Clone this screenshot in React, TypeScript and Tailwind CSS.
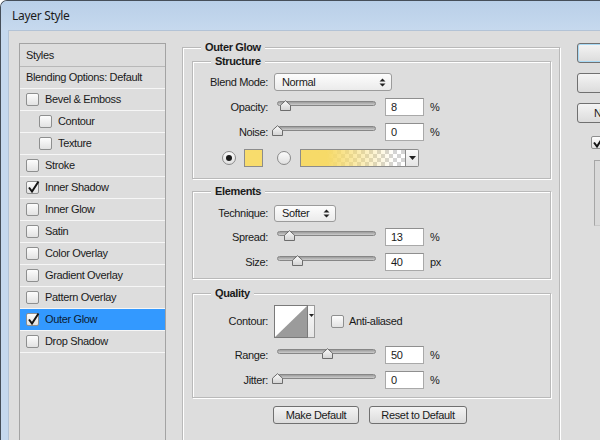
import React from "react";

function Check({ checked = false, className = "" }: { checked?: boolean; className?: string }) {
  return (
    <div
      className={`relative w-[13px] h-[13px] shrink-0 rounded-[2px] border border-[#8e8f8f] bg-linear-to-b from-[#fdfdfd] to-[#e2e2e2] ${className}`}
    >
      {checked && (
        <svg className="absolute left-[0px] -top-[2px]" width="13" height="14" viewBox="0 0 13 14">
          <path d="M2 7.5 L5 11.5 L11.5 1.5" fill="none" stroke="#151515" strokeWidth="2" />
        </svg>
      )}
    </div>
  );
}

function Radio({ on = false }: { on?: boolean }) {
  return (
    <div className="w-[14px] h-[14px] shrink-0 rounded-full border border-[#8a8a8a] bg-linear-to-b from-[#fbfbfb] to-[#e0e0e0] flex items-center justify-center">
      {on && <div className="w-[6px] h-[6px] rounded-full bg-[#1a1a1a]" />}
    </div>
  );
}

function UpDown() {
  return (
    <svg width="7" height="9" viewBox="0 0 7 9">
      <path d="M0.5 3.5 L3.5 0.5 L6.5 3.5 Z M0.5 5.5 L3.5 8.5 L6.5 5.5 Z" fill="#222" />
    </svg>
  );
}

function Label({ children }: { children: React.ReactNode }) {
  return <div className="w-[75px] shrink-0 text-right">{children}</div>;
}

function Field({ value }: { value: string }) {
  return (
    <div className="ml-[3px] w-[39px] h-[18px] shrink-0 flex items-center pl-[5px] bg-white border border-[#a9a9a9] border-t-[#8f8f8f]">
      {value}
    </div>
  );
}

function Slider({ pos }: { pos: number }) {
  return (
    <div className="relative ml-[4px] w-[110px] h-[18px] shrink-0">
      <div className="absolute left-[5px] top-[3px] w-[99px] h-[5px] rounded-full border border-[#868686] bg-linear-to-b from-[#9c9c9c] to-[#cdcdcd]" />
      <svg className="absolute top-[2px]" style={{ left: pos }} width="11" height="11" viewBox="0 0 11 11">
        <defs>
          <linearGradient id="thumbg" x1="0" y1="0" x2="0" y2="1">
            <stop offset="0" stopColor="#fbfbfb" />
            <stop offset="1" stopColor="#d2d2d2" />
          </linearGradient>
        </defs>
        <path d="M5.5 0.7 L10.5 5.2 L10.5 10.5 L0.5 10.5 L0.5 5.2 Z" fill="url(#thumbg)" stroke="#6c6c6c" />
      </svg>
    </div>
  );
}

function SliderRow({ label, pos, value, unit }: { label: string; pos: number; value: string; unit: string }) {
  return (
    <div className="flex items-center h-[18px]">
      <Label>{label}</Label>
      <Slider pos={pos} />
      <Field value={value} />
      <div className="ml-[6px]">{unit}</div>
    </div>
  );
}

function Group({
  title,
  legendClass,
  className = "",
  children,
}: {
  title: string;
  legendClass: string;
  className?: string;
  children: React.ReactNode;
}) {
  return (
    <div className={`border border-[#b9b9b9] shadow-[inset_1px_1px_0_#ffffff,1px_1px_0_#ffffff] ${className}`}>
      <div className={`-mt-[8px] -mb-[6px] h-[14px] leading-[14px] w-fit px-[4px] bg-[#dddddd] font-bold ${legendClass}`}>
        {title}
      </div>
      {children}
    </div>
  );
}

function Button({ children, className = "" }: { children: React.ReactNode; className?: string }) {
  return (
    <div
      className={`shrink-0 flex items-center rounded-[3px] border border-[#707070] bg-linear-to-b from-[#f4f4f4] to-[#dcdcdc] ${className}`}
    >
      {children}
    </div>
  );
}

const items: { name: string; indent?: boolean; checked?: boolean; active?: boolean }[] = [
  { name: "Bevel & Emboss" },
  { name: "Contour", indent: true },
  { name: "Texture", indent: true },
  { name: "Stroke" },
  { name: "Inner Shadow", checked: true },
  { name: "Inner Glow" },
  { name: "Satin" },
  { name: "Color Overlay" },
  { name: "Gradient Overlay" },
  { name: "Pattern Overlay" },
  { name: "Outer Glow", checked: true, active: true },
  { name: "Drop Shadow" },
];

export default function App() {
  return (
    <div className="w-[600px] h-[440px] overflow-hidden bg-white font-['Liberation_Sans',Arial,sans-serif] text-[11px] text-[#1a1a1a] tracking-[-0.35px]">
      <div className="w-[660px] h-[500px] flex flex-col rounded-tl-[7px] border-l border-t border-[#454e59] bg-[#c5d8ee]">
        {/* Title bar */}
        <div className="h-[29px] shrink-0 flex items-center pl-[11px] rounded-tl-[6px] bg-linear-to-b from-[#b9cfe8] to-[#c6d9ee] font-['Noto_Sans',sans-serif] text-[12px] tracking-[-0.3px] text-[#1b1b1b]">
          Layer Style
        </div>
        <div className="flex-1 flex pl-[7px]">
          <div className="flex-1 flex items-start bg-[#dddddd] border-l border-t border-[#b3c3d6]">
            {/* Styles list */}
            <div className="ml-[10px] mt-[12px] w-[147px] h-[420px] shrink-0 border border-[#a3a3a3] flex flex-col">
              <div className="h-[23px] shrink-0 flex items-center pl-[6px] border-b border-[#b8b8b8]">Styles</div>
              <div className="h-[22px] shrink-0 flex items-center pl-[6px] border-b border-[#f6f6f6]">
                Blending Options: Default
              </div>
              {items.map((it) => (
                <div
                  key={it.name}
                  className={`h-[22px] shrink-0 flex items-center gap-[6px] border-b border-[#f6f6f6] ${
                    it.indent ? "pl-[19px]" : "pl-[6px]"
                  } ${it.active ? "bg-[#3399ff] text-[#0c1c33]" : ""}`}
                >
                  <Check checked={it.checked} />
                  <span>{it.name}</span>
                </div>
              ))}
            </div>

            {/* Outer Glow panel */}
            <Group
              title="Outer Glow"
              legendClass="ml-[9px]"
              className="ml-[16px] mt-[16px] w-[378px] h-[420px] shrink-0 pl-[9px] pr-[8px]"
            >
              <Group title="Structure" legendClass="ml-[18px]" className="mt-[13px]">
                <div className="pt-[11px] pb-[11px] flex flex-col gap-[7px]">
                  <div className="flex items-center h-[18px]">
                    <Label>Blend Mode:</Label>
                    <div className="ml-[6px] w-[118px] h-[18px] flex items-center justify-between pl-[7px] pr-[5px] rounded-[3px] border border-[#9b9b9b] bg-linear-to-b from-[#fdfdfd] to-[#ebebeb]">
                      <span>Normal</span>
                      <UpDown />
                    </div>
                  </div>
                  <SliderRow label="Opacity:" pos={8} value="8" unit="%" />
                  <SliderRow label="Noise:" pos={0} value="0" unit="%" />
                  <div className="mt-[1px] h-[18px] flex items-center pl-[29px]">
                    <Radio on />
                    <div className="ml-[8px] w-[19px] h-[18px] border border-[#8c8c8c] bg-[#f8dc6c]" />
                    <div className="ml-[14px]">
                      <Radio />
                    </div>
                    <div className="ml-[9px] flex h-[18px]">
                      <div className="w-[106px] h-[18px] border border-[#8c8c8c] bg-[conic-gradient(#d4d4d4_25%,#ffffff_0_50%,#d4d4d4_0_75%,#ffffff_0)] bg-[length:8px_8px]">
                        <div className="w-full h-full bg-linear-to-r from-[#f7da68] from-25% to-[#f7da6800] to-90%" />
                      </div>
                      <div className="w-[13px] h-[18px] border border-l-0 border-[#8c8c8c] bg-linear-to-b from-[#fbfbfb] to-[#e4e4e4] flex items-center justify-center rounded-r-[2px]">
                        <svg width="7" height="4" viewBox="0 0 7 4">
                          <path d="M0 0 L7 0 L3.5 4 Z" fill="#222" />
                        </svg>
                      </div>
                    </div>
                  </div>
                </div>
              </Group>

              <Group title="Elements" legendClass="ml-[18px]" className="mt-[12px]">
                <div className="pt-[13px] pb-[7px] flex flex-col">
                  <div className="flex items-center h-[17px]">
                    <Label>Technique:</Label>
                    <div className="ml-[6px] w-[62px] h-[17px] flex items-center justify-between pl-[7px] pr-[5px] rounded-[3px] border border-[#9b9b9b] bg-linear-to-b from-[#fdfdfd] to-[#ebebeb]">
                      <span>Softer</span>
                      <UpDown />
                    </div>
                  </div>
                  <div className="mt-[6px]">
                    <SliderRow label="Spread:" pos={12} value="13" unit="%" />
                  </div>
                  <div className="mt-[7px]">
                    <SliderRow label="Size:" pos={20} value="40" unit="px" />
                  </div>
                </div>
              </Group>

              <Group title="Quality" legendClass="ml-[18px]" className="mt-[14px]">
                <div className="pt-[11px] pb-[8px] flex flex-col">
                  <div className="flex items-center h-[33px]">
                    <Label>Contour:</Label>
                    <div className="ml-[6px] flex h-[33px]">
                      <div className="w-[34px] h-[33px] border border-[#7a7a7a] bg-white">
                        <svg width="32" height="31" viewBox="0 0 32 31" className="block">
                          <path d="M0 31 L32 0 L32 31 Z" fill="#9b9b9b" />
                        </svg>
                      </div>
                      <div className="w-[7px] h-[33px] border border-l-0 border-[#9a9a9a] bg-linear-to-b from-[#fafafa] to-[#e6e6e6] flex justify-center pt-[8px]">
                        <svg width="5" height="3" viewBox="0 0 5 3">
                          <path d="M0 0 L5 0 L2.5 3 Z" fill="#222" />
                        </svg>
                      </div>
                    </div>
                    <Check className="ml-[16px]" />
                    <span className="ml-[5px]">Anti-aliased</span>
                  </div>
                  <div className="mt-[8px]">
                    <SliderRow label="Range:" pos={50} value="50" unit="%" />
                  </div>
                  <div className="mt-[7px]">
                    <SliderRow label="Jitter:" pos={0} value="0" unit="%" />
                  </div>
                </div>
              </Group>

              <div className="mt-[8px] ml-[81px] flex gap-[10px]">
                <Button className="w-[86px] h-[18px] justify-center">Make Default</Button>
                <Button className="w-[98px] h-[18px] justify-center">Reset to Default</Button>
              </div>
            </Group>

            {/* Right column */}
            <div className="ml-[17px] mt-[12px] w-[110px] shrink-0 flex flex-col">
              <Button className="w-[90px] h-[20px] pl-[38px] border-[#3c7fb1] shadow-[inset_0_0_0_1px_#a8daf6]">OK</Button>
              <Button className="mt-[10px] w-[90px] h-[20px] pl-[28px]">Cancel</Button>
              <Button className="mt-[10px] w-[90px] h-[20px] pl-[16px]">New Style...</Button>
              <div className="mt-[11px] ml-[14px] flex items-center gap-[5px]">
                <Check checked />
                <span>Preview</span>
              </div>
              <div className="mt-[9px] ml-[17px] w-[60px] h-[66px] border border-[#a6a6a6] border-b-[#c8c8c8] bg-[#d9d9d9]" />
            </div>
          </div>
        </div>
      </div>
    </div>
  );
}
